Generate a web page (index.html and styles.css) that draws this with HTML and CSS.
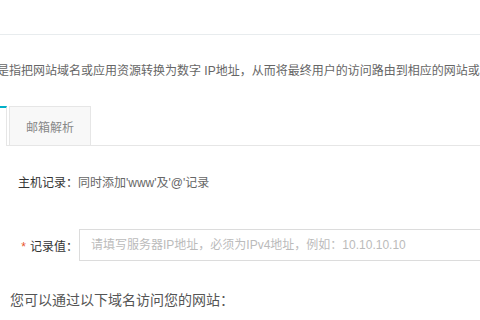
FILE: index.html
```html
<!DOCTYPE html>
<html lang="zh-CN">
<head>
<meta charset="utf-8">
<link rel="stylesheet" href="styles.css">
</head>
<body>
<div class="page">
  <div class="topbar"></div>
  <p class="desc">是指把网站域名或应用资源转换为数字 IP地址，从而将最终用户的访问路由到相应的网站或客户端应用程序上。</p>
  <div class="tabs">
    <div class="tab active"></div>
    <div class="tab">邮箱解析</div>
  </div>
  <div class="row host">
    <span class="label">主机记录：</span>
    <span class="value">同时添加'www'及'@'记录</span>
  </div>
  <div class="row field">
    <label class="label"><span class="star">*</span>记录值：</label>
    <input class="input" type="text" placeholder="请填写服务器IP地址，必须为IPv4地址，例如：10.10.10.10">
  </div>
  <p class="tip">您可以通过以下域名访问您的网站：</p>
</div>
</body>
</html>
```
FILE: styles.css
```css
html, body {
  margin: 0;
  padding: 0;
  background: #fff;
  overflow: hidden;
}
body {
  font-family: "Liberation Sans", "Noto Sans CJK SC", sans-serif;
  font-size: 12px;
  color: #333;
}
.page {
  width: 480px;
  height: 320px;
  overflow: hidden;
}
.topbar {
  height: 34px;
  border-bottom: 1px solid #e8ecee;
}
.desc {
  margin: 27px 0 0 -3px;
  line-height: 18px;
  white-space: nowrap;
  color: #666;
}
.tabs {
  display: flex;
  margin: 26px 0 0 -80px;
  border-bottom: 1px solid #e6e6e6;
  height: 39px;
}
.tab {
  box-sizing: border-box;
  height: 39px;
  width: 82px;
  display: flex;
  align-items: center;
  justify-content: center;
  color: #888;
  background: #f8f8f8;
  border: 1px solid #e6e6e6;
  border-bottom: none;
}
.tab.active {
  width: 87px;
  height: 40px;
  margin-bottom: -1px;
  background: #fff;
  color: #333;
  border: none;
  border-top: 2px solid #00b0c8;
  border-right: 1px solid #e6e6e6;
  margin-right: 2px;
}
.row {
  display: flex;
  align-items: center;
}
.label {
  width: 78px;
  text-align: right;
  color: #333;
  flex-shrink: 0;
}
.host {
  margin-top: 28px;
  line-height: 18px;
}
.host .value {
  color: #666;
}
.field {
  margin-top: 37px;
}
.star {
  color: #e8542c;
  margin-right: 4px;
}
.input {
  box-sizing: border-box;
  margin-left: 1px;
  width: 460px;
  flex-shrink: 0;
  height: 32px;
  border: 1px solid #dcdcdc;
  padding: 0 11px;
  font-family: "Liberation Sans", "Noto Sans CJK SC", sans-serif;
  font-size: 12px;
  color: #333;
  outline: none;
}
.input::placeholder {
  color: #bbb;
}
.tip {
  margin: 30px 0 0 10px;
  font-size: 14px;
  line-height: 18px;
  color: #555;
}
```
